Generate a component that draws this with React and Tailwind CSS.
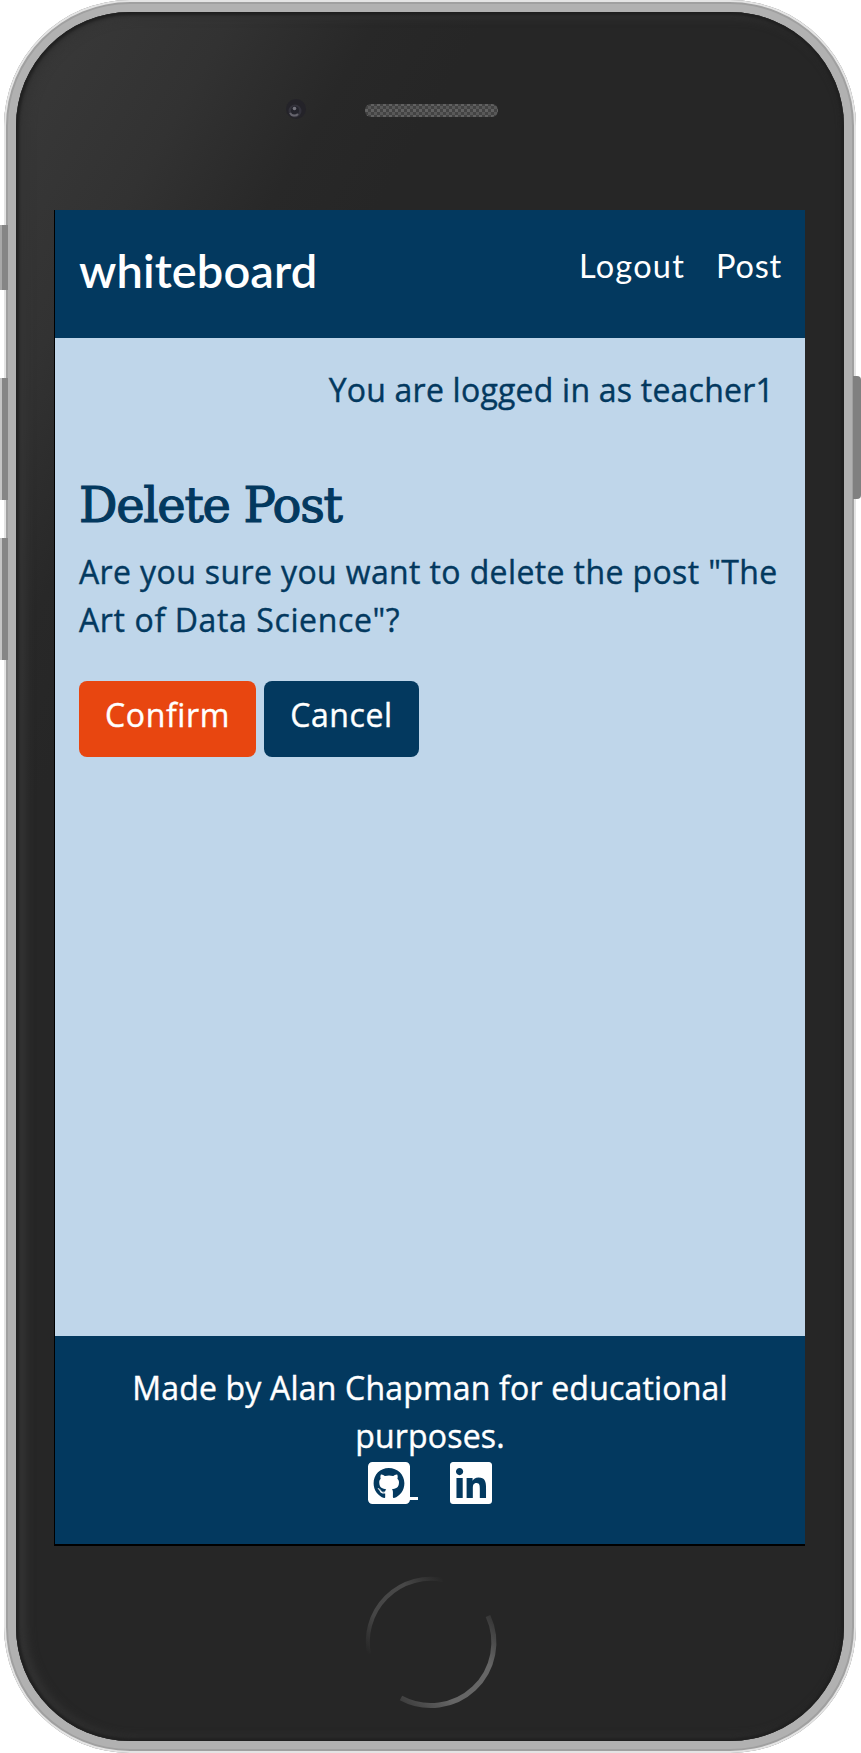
import { FaGithubSquare, FaLinkedin } from "react-icons/fa";

function SideButton({ className }) {
  return <div className={`absolute ${className}`} />;
}

function Camera() {
  return (
    <svg className="absolute left-[283px] top-[97px]" width="24" height="26" viewBox="0 0 24 26">
      <circle cx="13" cy="12" r="10" fill="#242329" />
      <circle cx="12" cy="14" r="6.500" fill="#33323b" />
      <circle cx="12" cy="13.500" r="4" fill="#24242c" />
      <circle cx="11.500" cy="11.500" r="1.800" fill="#77767f" />
      <path d="M7 16a5 5 0 0 0 8 1" stroke="#65646d" strokeWidth="2" fill="none" />
    </svg>
  );
}

function Speaker() {
  return (
    <svg className="absolute left-[365px] top-[103px]" width="134" height="16" viewBox="0 0 134 16">
      <defs>
        <pattern id="mesh" width="6" height="6" patternUnits="userSpaceOnUse">
          <rect width="6" height="6" fill="#434343" />
          <rect width="3" height="3" fill="#616161" />
          <rect x="3" y="3" width="3" height="3" fill="#585858" />
        </pattern>
      </defs>
      <rect x="0" y="1" width="133" height="13" rx="6" fill="url(#mesh)" />
    </svg>
  );
}

function HomeButton() {
  return (
    <svg className="absolute left-[359px] top-[1570px]" width="144" height="144" viewBox="0 0 144 144">
      <defs>
        <linearGradient id="arcA" x1="0" y1="1" x2="1" y2="0">
          <stop offset="0" stopColor="#262626" />
          <stop offset="0.300" stopColor="#464646" />
          <stop offset="0.700" stopColor="#484848" />
          <stop offset="1" stopColor="#262626" />
        </linearGradient>
        <linearGradient id="arcB" x1="0" y1="1" x2="1" y2="0">
          <stop offset="0" stopColor="#3a3a3a" />
          <stop offset="0.300" stopColor="#666" />
          <stop offset="0.700" stopColor="#666" />
          <stop offset="1" stopColor="#333" />
        </linearGradient>
      </defs>
      <path d="M10 84A63 63 0 0 1 84 10" fill="none" stroke="url(#arcA)" strokeWidth="4" />
      <path d="M129 46A63 63 0 0 1 42 128" fill="none" stroke="url(#arcB)" strokeWidth="5" />
    </svg>
  );
}

function Header() {
  return (
    <header className="flex h-32 shrink-0 items-start justify-between bg-[#03395f] px-6 font-['Lato',sans-serif] text-white">
      <a className="mt-[30px] text-[47px] leading-[60px] font-semibold tracking-[0.1px]">whiteboard</a>
      <nav className="mt-8 flex gap-[31px] text-[32.5px] leading-[48px]">
        <a className="tracking-[1.2px]">Logout</a>
        <a className="-mr-px tracking-[0.8px]">Post</a>
      </nav>
    </header>
  );
}

function Main() {
  return (
    <main className="grow bg-[#bfd6ea] px-6 text-[32px] leading-[48px] text-[#03395f] [-webkit-text-stroke:0.4px_currentColor]">
      <p className="mt-[28px] pr-[7px] text-right tracking-[0.22px] whitespace-nowrap">You are logged in as teacher1</p>
      <h1 className="mt-[62px] font-['DejaVu_Serif',serif] text-[48px] leading-[58px] font-normal tracking-[-1.3px] whitespace-nowrap [-webkit-text-stroke:1.2px_#03395f]">
        Delete Post
      </h1>
      <p className="mt-[14px] whitespace-nowrap">
        <span className="tracking-[0.38px]">Are you sure you want to delete the post "The</span>
        <br />
        <span className="tracking-[0.62px]">Art of Data Science"?</span>
      </p>
      <div className="mt-[37px] flex gap-2 text-white">
        <button className="h-[76px] w-[177px] rounded-lg bg-[#e84610] pb-[8px] tracking-[0.6px]">Confirm</button>
        <button className="h-[76px] w-[155px] rounded-lg bg-[#03395f] pb-[8px] tracking-[0.6px]">Cancel</button>
      </div>
    </main>
  );
}

function Footer() {
  return (
    <footer className="flex h-[208px] shrink-0 flex-col items-center bg-[#03395f] pt-[28px] text-center text-[32px] leading-[48px] text-white">
      <p className="tracking-[0.19px] whitespace-nowrap [-webkit-text-stroke:0.4px_currentColor]">
        Made by Alan Chapman for educational
        <br />
        purposes.
      </p>
      <div className="-mt-px flex gap-8">
        <a className="flex items-start">
          <FaGithubSquare className="h-12 w-[42px]" />
          <span className="mt-[38px] h-[3px] w-2 bg-white" />
        </a>
        <a>
          <FaLinkedin className="h-12 w-[42px]" />
        </a>
      </div>
    </footer>
  );
}

export default function App() {
  return (
    <div className="relative h-[1753px] w-[861px] overflow-hidden bg-white font-['Open_Sans',sans-serif]">
      <SideButton className="left-0 top-[225px] h-[65px] w-[8px] bg-[linear-gradient(to_right,#a8a8a8_2px,#858585_2px)]" />
      <SideButton className="left-0 top-[378px] h-[122px] w-[8px] bg-[linear-gradient(to_right,#c4c4c4_2px,#858585_2px)]" />
      <SideButton className="left-0 top-[538px] h-[122px] w-[8px] bg-[linear-gradient(to_right,#c4c4c4_2px,#858585_2px)]" />
      <SideButton className="left-[853px] top-[376px] h-[123px] w-[8px] rounded-r-sm bg-[#808080]" />
      <div className="ml-1 h-[1753px] w-[852px] rounded-[126px] bg-[#b1b1b1] p-3 shadow-[inset_0_0_0_2px_#e4e4e4,inset_0_0_0_4px_#a0a0a0]">
        <div className="h-[1729px] w-[828px] rounded-[114px] bg-[linear-gradient(120deg,#3a3a3a_0%,#323232_12%,#282828_20%,#262626_26%)] pt-[198px] pl-[38px] shadow-[inset_0_0_3px_3px_#202020,inset_6px_1px_10px_4px_#343434]">
          <div className="box-content flex h-[1334px] w-[750px] flex-col border-b-2 border-l border-black">
            <Header />
            <Main />
            <Footer />
          </div>
        </div>
      </div>
      <Camera />
      <Speaker />
      <HomeButton />
    </div>
  );
}
